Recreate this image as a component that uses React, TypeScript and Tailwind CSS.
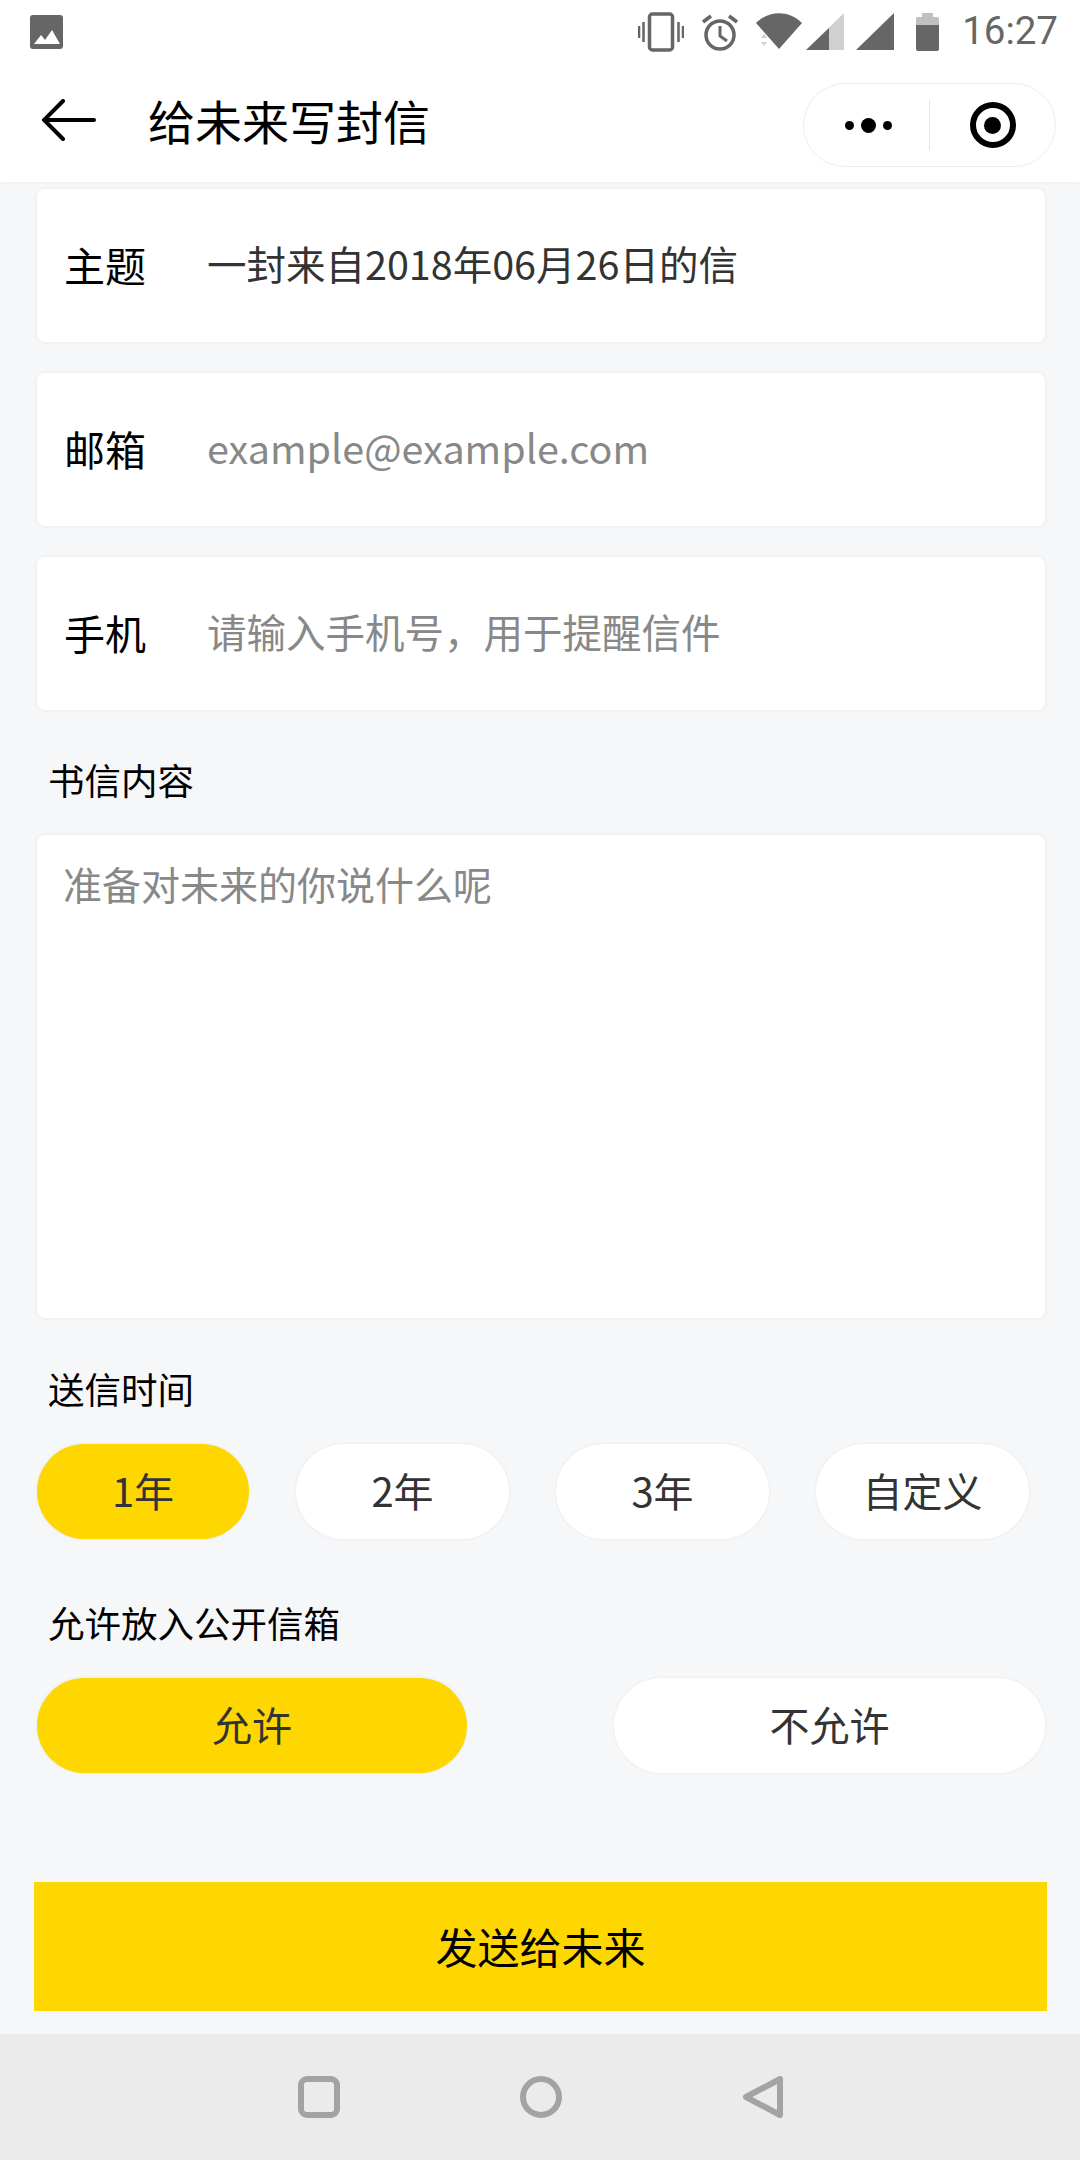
import React from "react";

const cjk = "font-['Noto_Sans_CJK_SC','Noto_Sans',sans-serif]";

const Field = ({ label, value, muted }: { label: string; value: string; muted?: boolean }) => (
  <div className="flex h-[153px] items-center rounded-[8px] bg-white pl-[27px] shadow-[0_0_4px_rgba(0,0,0,0.07)]">
    <span className="w-[143px] pb-[2px] text-[41px] leading-none text-black">{label}</span>
    <span className={`pb-[5px] text-[39.5px] leading-none ${muted ? "text-[#888888]" : "text-[#333333]"}`}>{value}</span>
  </div>
);

const Pill = ({ text, active, width }: { text: string; active?: boolean; width: string }) => (
  <div
    className={`flex h-[95px] items-center justify-center rounded-full pb-[4px] text-[40px] leading-none text-[#333333] shadow-[0_0_3px_rgba(0,0,0,0.08)] ${width} ${
      active ? "bg-[#ffd700]" : "bg-white"
    }`}
  >
    {text}
  </div>
);

const StatusIcons = () => (
  <div className="flex items-center">
    {/* vibrate */}
    <svg width="46" height="40" viewBox="0 0 46 40" fill="none" stroke="#666666" className="mr-[17px]">
      <rect x="11.5" y="2" width="23" height="36" rx="3" strokeWidth="3.5" />
      <path d="M5.5 10v20M1 14v12M40.5 10v20M45 14v12" strokeWidth="2.5" />
    </svg>
    {/* alarm */}
    <svg width="38" height="38" viewBox="0 0 38 38" fill="none" stroke="#666666" className="mr-[17px]">
      <circle cx="19" cy="22" r="14" strokeWidth="3.5" />
      <path d="M19 13v10l7 5" strokeWidth="3" />
      <path d="M2 9l8-6M36 9l-8-6" strokeWidth="3.5" />
    </svg>
    {/* wifi */}
    <svg width="46" height="38" viewBox="0 0 46 38" className="mr-[4px]">
      <path d="M0 10C13 -3 33 -3 46 10L23 36Z" fill="#666666" />
      <path d="M5 25l3-4 3 4ZM5 29l3 4 3-4Z" fill="#d0d0d0" />
    </svg>
    {/* sim 1 */}
    <svg width="38" height="38" viewBox="0 0 38 38" className="mr-[12px]">
      <path d="M0 37L38 0V37Z" fill="#d0d0d0" />
      <path d="M0 37L23 15V37Z" fill="#666666" />
    </svg>
    {/* sim 2 */}
    <svg width="38" height="38" viewBox="0 0 38 38" className="mr-[22px]">
      <path d="M0 37L38 0V37Z" fill="#666666" />
    </svg>
    {/* battery */}
    <svg width="23" height="38" viewBox="0 0 23 38" className="mr-[23px]">
      <path d="M6 0h11v4h4a2 2 0 0 1 2 2v6H0V6a2 2 0 0 1 2-2h4Z" fill="#c0c0c0" />
      <path d="M0 12h23v24a2 2 0 0 1-2 2H2a2 2 0 0 1-2-2Z" fill="#666666" />
    </svg>
    <span className="font-['Roboto',sans-serif] text-[38.5px] leading-none text-[#666666]">16:27</span>
  </div>
);

export default function App() {
  return (
    <div className={`flex h-[2160px] w-[1080px] flex-col overflow-hidden bg-[#f6f7f9] ${cjk}`}>
      {/* status bar */}
      <div className="flex h-[68px] shrink-0 items-center justify-between bg-white pb-[5px] pl-[30px] pr-[22px]">
        <svg width="33" height="34" viewBox="0 0 33 34">
          <rect width="33" height="34" rx="3" fill="#666666" />
          <path d="M4 29l7-9 4 5 7-10 8 14Z" fill="#ffffff" />
        </svg>
        <StatusIcons />
      </div>

      {/* nav bar */}
      <div className="flex h-[114px] shrink-0 items-center bg-white pl-[42px] pr-[24px] shadow-[0_1px_3px_rgba(0,0,0,0.04)]">
        <svg width="54" height="42" viewBox="0 0 54 42" fill="none" stroke="#000000" strokeWidth="4" strokeLinecap="round" className="mr-[52px] mt-[-10px]">
          <path d="M52 21H3M21 2L2 21l19 19" />
        </svg>
        <span className="pb-[12px] text-[47px] leading-none text-black">给未来写封信</span>
        <div className="ml-auto flex h-[84px] w-[253px] items-center rounded-full border border-[#eeeeee] bg-white">
          <div className="flex w-[125px] items-center justify-center gap-[7px] pl-[3px]">
            <span className="size-[9px] rounded-full bg-black" />
            <span className="size-[15px] rounded-full bg-black" />
            <span className="size-[9px] rounded-full bg-black" />
          </div>
          <div className="h-[50px] w-px bg-[#e5e5e5]" />
          <div className="flex flex-1 items-center justify-center">
            <div className="flex size-[46px] items-center justify-center rounded-full border-[6px] border-black">
              <span className="size-[17px] rounded-full bg-black" />
            </div>
          </div>
        </div>
      </div>

      {/* form */}
      <div className="flex flex-1 flex-col pl-[37px] pr-[35px] pt-[7px]">
        <div className="flex flex-col gap-[31px]">
          <Field label="主题" value="一封来自2018年06月26日的信" />
          <Field label="邮箱" value="example@example.com" muted />
          <Field label="手机" value="请输入手机号，用于提醒信件" muted />
        </div>

        <div className="mt-[44px] pl-[11px] text-[36.5px] leading-[52px] text-black">书信内容</div>
        <div className="mt-[29px] h-[483px] rounded-[8px] bg-white pl-[26px] pt-[24px] text-[39px] leading-[48px] text-[#888888] shadow-[0_0_4px_rgba(0,0,0,0.07)]">
          准备对未来的你说什么呢
        </div>

        <div className="mt-[45px] pl-[11px] text-[36.5px] leading-[52px] text-black">送信时间</div>
        <div className="mt-[29px] flex justify-between pr-[16px]">
          <Pill text="1年" active width="w-[212px]" />
          <Pill text="2年" width="w-[213px]" />
          <Pill text="3年" width="w-[213px]" />
          <Pill text="自定义" width="w-[213px]" />
        </div>

        <div className="mt-[58px] pl-[11px] text-[36.5px] leading-[52px] text-black">允许放入公开信箱</div>
        <div className="mt-[29px] flex justify-between">
          <Pill text="允许" active width="w-[430px]" />
          <Pill text="不允许" width="w-[431px]" />
        </div>

        <div className="ml-[-3px] mr-[-2px] mt-[109px] flex h-[129px] items-center justify-center bg-[#ffd700] pb-[2px] text-[42px] leading-none text-black">
          发送给未来
        </div>
      </div>

      {/* android nav */}
      <div className="flex h-[126px] shrink-0 items-center justify-center bg-[#ebebeb]">
        <svg width="42" height="42" viewBox="0 0 42 42" fill="none" stroke="#a3a3a3" strokeWidth="6" className="mr-[180px]">
          <rect x="3" y="3" width="36" height="36" rx="6" />
        </svg>
        <svg width="42" height="42" viewBox="0 0 42 42" fill="none" stroke="#a3a3a3" strokeWidth="6" className="mr-[181px]">
          <circle cx="21" cy="21" r="18" />
        </svg>
        <svg width="40" height="42" viewBox="0 0 40 42" fill="none" stroke="#a3a3a3" strokeWidth="6" strokeLinejoin="round">
          <path d="M37 3L3 21l34 18Z" />
        </svg>
      </div>
    </div>
  );
}
